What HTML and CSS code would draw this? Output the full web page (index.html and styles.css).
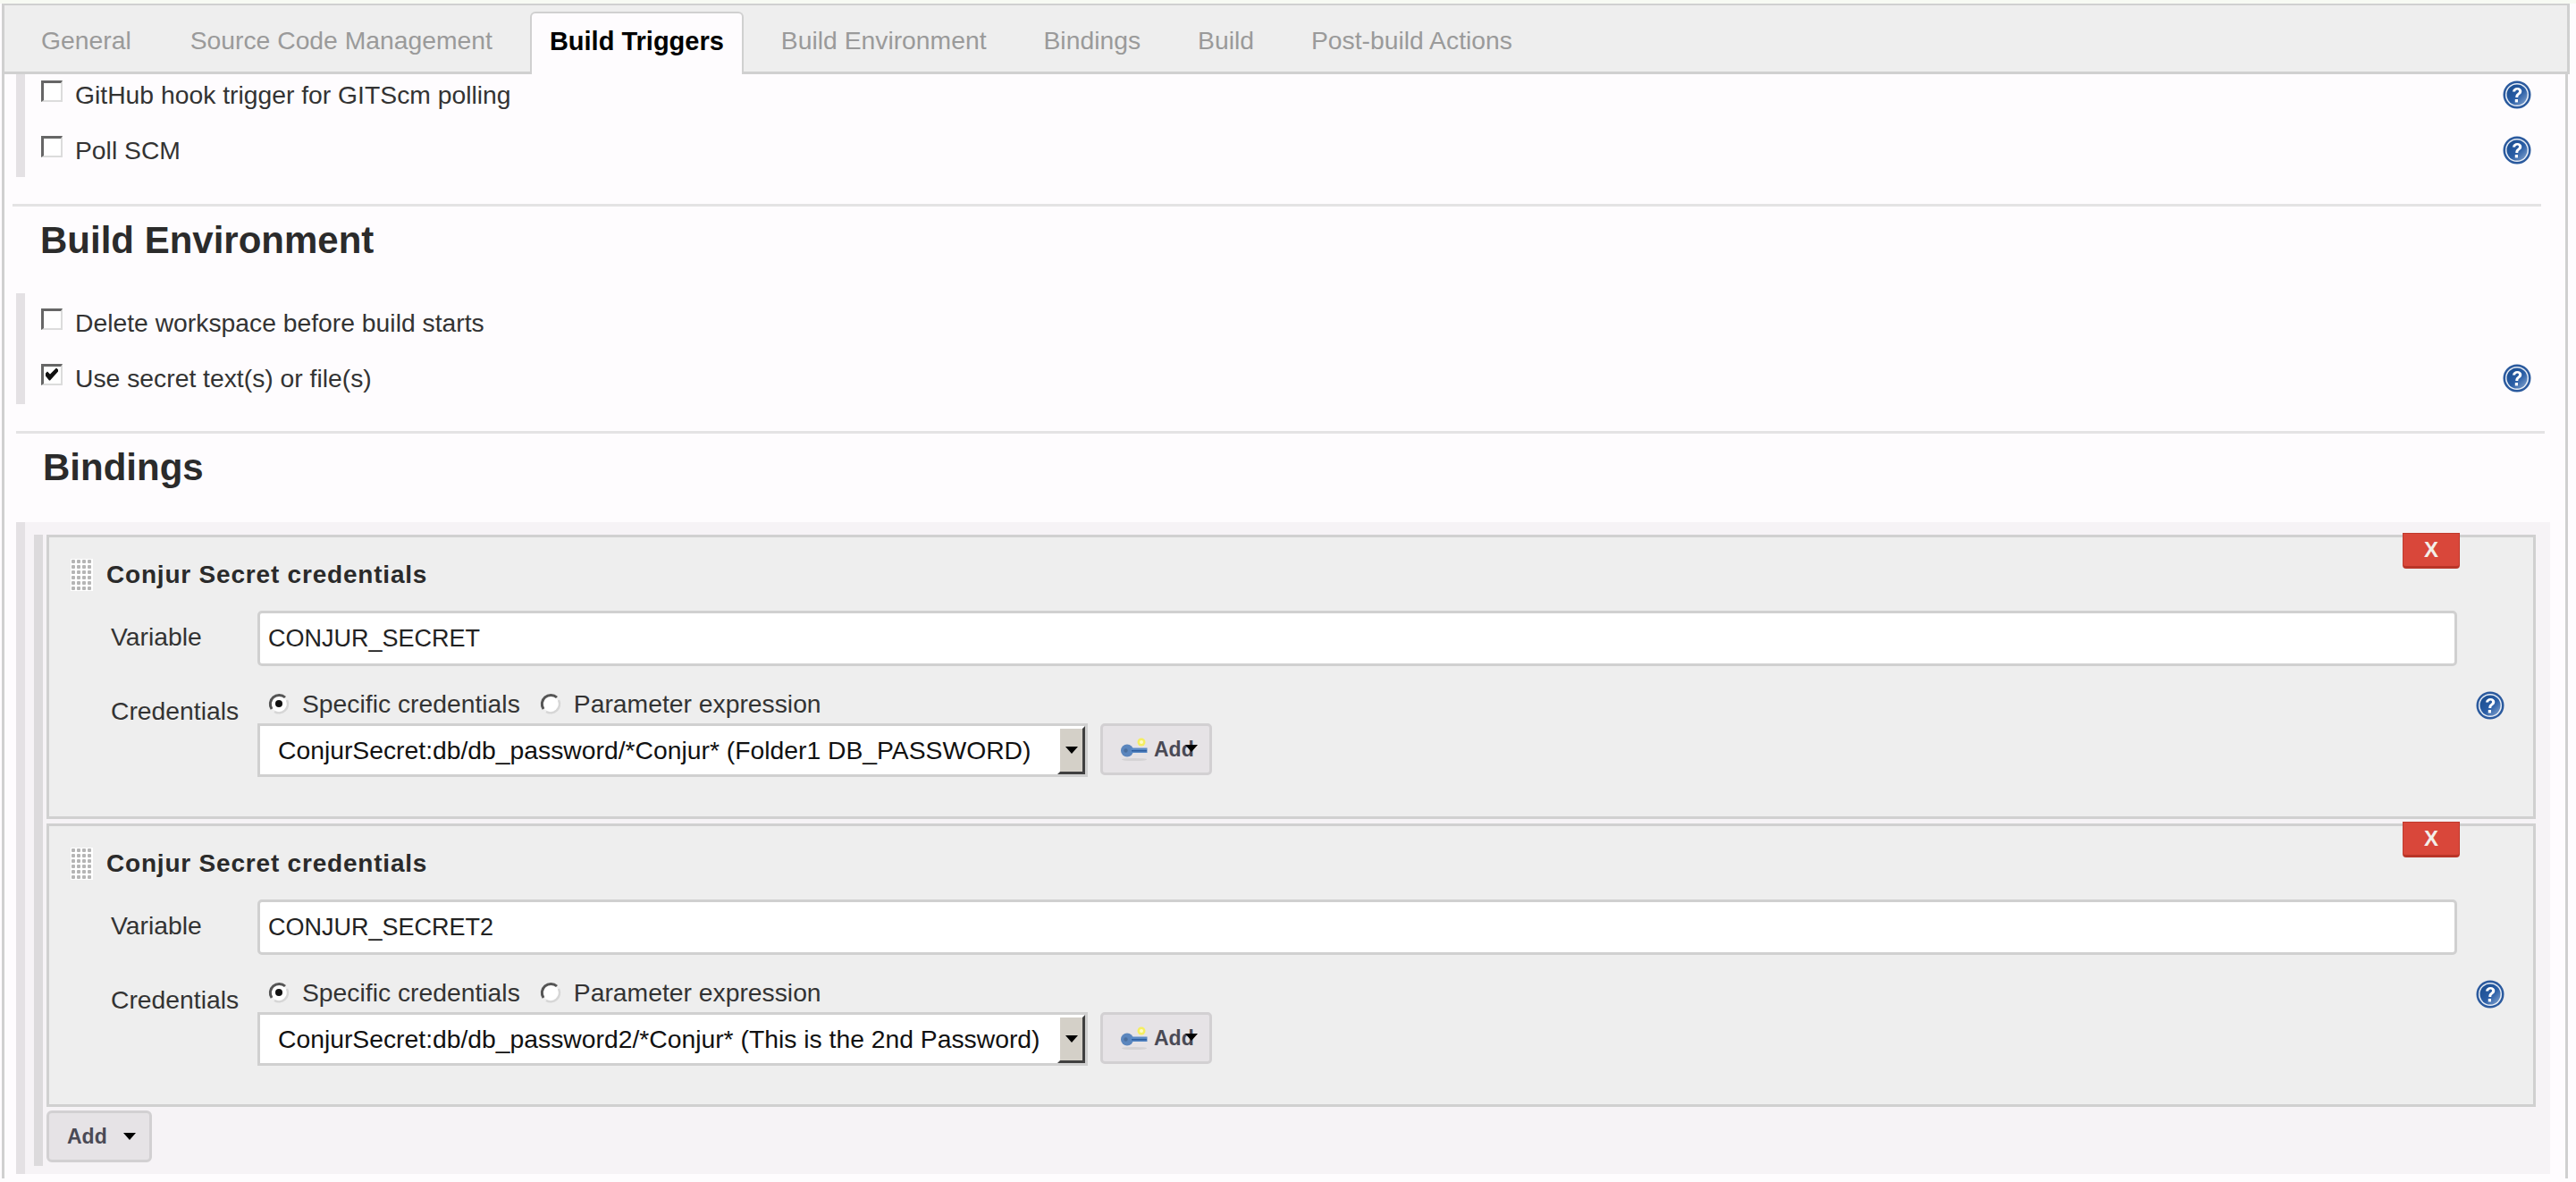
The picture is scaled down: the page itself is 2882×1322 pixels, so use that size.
FILE: index.html
```html
<!DOCTYPE html>
<html lang="en">
<head>
<meta charset="utf-8">
<title>Build Triggers</title>
<link rel="stylesheet" href="styles.css">
</head>
<body>
<svg class="defs" width="0" height="0" aria-hidden="true">
  <defs>
    <linearGradient id="helpfill" x1="0" y1="0" x2="1" y2="1">
      <stop offset="0" stop-color="#174a8c"/>
      <stop offset="0.55" stop-color="#2a5ea6"/>
      <stop offset="1" stop-color="#8aa9d2"/>
    </linearGradient>
    <symbol id="help" viewBox="0 0 32 32">
      <circle cx="16" cy="16" r="15.500" fill="#2b5a9e"/>
      <circle cx="16" cy="16" r="13" fill="#e8eef6"/>
      <circle cx="16" cy="16" r="11.500" fill="url(#helpfill)"/>
      <path d="M11 12.500c.4-3 2.500-4.600 5.300-4.600 3 0 5 1.700 5 4.200 0 2-1.100 3-2.500 4-1.200.9-1.500 1.500-1.500 3h-3c0-2.500.6-3.500 2-4.600 1.100-.8 1.800-1.400 1.800-2.400 0-1-.7-1.600-1.800-1.600-1.200 0-2 .8-2.200 2z" fill="#fff"/>
      <rect x="13.800" y="21" width="3.200" height="3.400" fill="#fff"/>
    </symbol>
    <symbol id="key" viewBox="0 0 30 28">
      <ellipse cx="15" cy="25.500" rx="14" ry="1.600" fill="#d5d3d5"/>
      <circle cx="23" cy="6" r="4.500" fill="#f5ee62"/>
      <circle cx="23" cy="6" r="2" fill="#fffbc4"/>
      <circle cx="7" cy="15.500" r="7" fill="#5b86bd"/>
      <circle cx="5.500" cy="15.500" r="2.200" fill="#4a6f9e"/>
      <rect x="11" y="12.500" width="18.500" height="5.500" fill="#5a8ac6"/>
      <rect x="12" y="15" width="17" height="1.500" fill="#2c5d9e"/>
    </symbol>
    <symbol id="check" viewBox="0 0 16 16">
      <path d="M1 7l2-2 3 3 7-7 2 2v2l-9 10h-1l-4-5z" fill="#111"/>
    </symbol>
    <symbol id="radio" viewBox="0 0 24 24">
      <circle cx="12" cy="12" r="9" fill="#fff"/>
      <path d="M4 18A10 10 0 0 1 19 5" fill="none" stroke="#555" stroke-width="3"/>
      <path d="M21 8A10 10 0 0 1 7 21" fill="none" stroke="#d6d6d6" stroke-width="2.500"/>
    </symbol>
  </defs>
</svg>
<div class="page">
  <nav class="tabs">
    <span class="tab">General</span>
    <span class="tab">Source Code Management</span>
    <span class="tab tab-active">Build Triggers</span>
    <span class="tab">Build Environment</span>
    <span class="tab">Bindings</span>
    <span class="tab">Build</span>
    <span class="tab">Post-build Actions</span>
  </nav>
  <main class="content">
    <section class="group group-first">
      <div class="opt">
        <span class="cb"></span><span class="opt-label">GitHub hook trigger for GITScm polling</span>
        <svg class="help"><use href="#help"/></svg>
      </div>
      <div class="opt">
        <span class="cb"></span><span class="opt-label">Poll SCM</span>
        <svg class="help"><use href="#help"/></svg>
      </div>
    </section>
    <hr class="rule rule-a">
    <h2 class="heading heading-a">Build Environment</h2>
    <section class="group group-second">
      <div class="opt">
        <span class="cb"></span><span class="opt-label">Delete workspace before build starts</span>
      </div>
      <div class="opt">
        <span class="cb"><svg class="tick"><use href="#check"/></svg></span><span class="opt-label">Use secret text(s) or file(s)</span>
        <svg class="help"><use href="#help"/></svg>
      </div>
    </section>
    <hr class="rule rule-b">
    <h2 class="heading heading-b">Bindings</h2>
    <section class="repeat">
      <div class="repeat-inner">
        <article class="panel">
          <button class="del">X</button>
          <header class="panel-head"><span class="grip"></span><span class="panel-title">Conjur Secret credentials</span></header>
          <div class="row row-var">
            <label class="row-label">Variable</label>
            <div class="field">CONJUR_SECRET</div>
          </div>
          <div class="row row-cred">
            <label class="row-label row-label-cred">Credentials</label>
            <div class="cred">
              <div class="radios">
                <span class="radio"><svg class="radio-ico"><use href="#radio"/></svg><i class="dot"></i></span><span class="radio-text">Specific credentials</span>
                <span class="radio radio-b"><svg class="radio-ico"><use href="#radio"/></svg></span><span class="radio-text">Parameter expression</span>
              </div>
              <div class="picker">
                <div class="select"><span class="select-text">ConjurSecret:db/db_password/*Conjur* (Folder1 DB_PASSWORD)</span><span class="select-btn"><i class="arrow"></i></span></div>
                <button class="add-key"><svg class="key"><use href="#key"/></svg><span class="add-key-text">Add</span><i class="arrow arrow-over"></i></button>
              </div>
            </div>
            <svg class="help help-cred"><use href="#help"/></svg>
          </div>
        </article>
        <article class="panel">
          <button class="del">X</button>
          <header class="panel-head"><span class="grip"></span><span class="panel-title">Conjur Secret credentials</span></header>
          <div class="row row-var">
            <label class="row-label">Variable</label>
            <div class="field">CONJUR_SECRET2</div>
          </div>
          <div class="row row-cred">
            <label class="row-label row-label-cred">Credentials</label>
            <div class="cred">
              <div class="radios">
                <span class="radio"><svg class="radio-ico"><use href="#radio"/></svg><i class="dot"></i></span><span class="radio-text">Specific credentials</span>
                <span class="radio radio-b"><svg class="radio-ico"><use href="#radio"/></svg></span><span class="radio-text">Parameter expression</span>
              </div>
              <div class="picker">
                <div class="select"><span class="select-text">ConjurSecret:db/db_password2/*Conjur* (This is the 2nd Password)</span><span class="select-btn"><i class="arrow"></i></span></div>
                <button class="add-key"><svg class="key"><use href="#key"/></svg><span class="add-key-text">Add</span><i class="arrow arrow-over"></i></button>
              </div>
            </div>
            <svg class="help help-cred"><use href="#help"/></svg>
          </div>
        </article>
        <button class="add-main"><span>Add</span><i class="arrow"></i></button>
      </div>
    </section>
  </main>
</div>
</body>
</html>
```
FILE: styles.css
```css
* { box-sizing: border-box; }
html, body { margin: 0; padding: 0; }
body {
  width: 2882px;
  height: 1322px;
  overflow: hidden;
  background: #fefcfe;
  color: #333;
  font-family: "Liberation Sans", Arial, sans-serif;
  font-size: 28.3px;
}
.defs { position: absolute; }
.page { padding: 4px 7px 0 2px; background: linear-gradient(#f7faf3 4px, transparent 4px); }

.tabs {
  display: flex;
  align-items: flex-end;
  height: 79px;
  padding-left: 9px;
  background: #eeeeee;
  border: 3px solid #d0d0d0;
  border-bottom-width: 3px;
  border-top-width: 2px;
}
.tab {
  display: flex;
  align-items: center;
  height: 70px;
  margin: 0 10px -3px;
  padding: 0 22px 6px;
  color: #9a9a9a;
  white-space: nowrap;
}
.tab:first-child { margin-right: 12px; }
.tab-active {
  background: #fefcfe;
  border: 2px solid #d0d0d0;
  border-bottom: 0;
  border-radius: 6px 6px 0 0;
  padding: 0 20px 5px;
  color: #000;
  font-weight: 700;
  font-size: 29px;
}

.content {
  position: relative;
  height: 1235px;
  padding: 0 0 0 12px;
  margin-right: 2px;
  border-left: 3px solid #d0d0d0;
  border-right: 3px solid #d0d0d0;
}
.group {
  border-left: 10px solid #e4e1e4;
  margin-left: 1px;
}
.group-first { height: 115px; padding-top: 7px; }
.group-second { height: 124px; padding-top: 17px; }
.opt {
  display: flex;
  align-items: flex-start;
  height: 62px;
  padding-left: 18px;
  padding-right: 7px;
  width: 2811px;
}
.cb {
  position: relative;
  flex: none;
  width: 24px;
  height: 24px;
  background: #fff;
  border-style: solid;
  border-width: 3px 2px 2px 3px;
  border-color: #666 #dcdcdc #dcdcdc #666;
}
.tick { position: absolute; left: 1px; top: 0; width: 16px; height: 17px; }
.opt-label { margin-left: 14px; line-height: 32px; color: #333; }
.help { flex: none; width: 32px; height: 32px; margin-left: auto; }

.rule {
  height: 3px;
  margin: 0;
  border: 0;
  background: #e4e3e4;
  width: 2829px;
}
.rule-a { margin: 30px 0 0 -3px; }
.rule-b { margin: 30px 0 0 1px; }
.heading {
  margin: 0;
  font-size: 42px;
  line-height: 46px;
  font-weight: 700;
  color: #2b2b2b;
}
.heading-a { padding: 15px 0 0 28px; height: 97px; }
.heading-b { padding: 15px 0 0 31px; height: 99px; }

.repeat {
  height: 729px;
  width: 2835px;
  margin-left: 1px;
  padding: 14px 0 0 10px;
  background: #f6f3f6;
  border-left: 10px solid #e4e1e4;
  margin-right: 0;
}
.repeat-inner {
  height: 706px;
  padding-left: 4px;
  border-left: 10px solid #dcdadc;
  width: 2799px;
}
.panel {
  position: relative;
  height: 318px;
  margin-bottom: 5px;
  padding: 24px 0 0 24px;
  background: #eeeeee;
  border: 3px solid #d0d0d0;
}
.panel + .panel { height: 317px; margin-bottom: 4px; }
.del {
  position: absolute;
  top: -5px;
  right: 82px;
  width: 64px;
  height: 40px;
  padding: 0;
  border: 1px solid #bf3a2d;
  border-bottom: 3px solid #b93528;
  border-radius: 0 0 4px 4px;
  background: #d9473a;
  color: #f3efe9;
  font: 700 24px "Liberation Sans", Arial, sans-serif;
}
.panel-head { display: flex; align-items: center; height: 36px; }
.grip {
  width: 25px;
  height: 36px;
  flex: none;
  background: #fff radial-gradient(circle, #b5b5b5 2px, transparent 2.500px) 0 0 / 6px 6px;
}
.panel-title {
  margin-left: 15px;
  font-size: 28px;
  font-weight: 700;
  color: #2a2a2a;
  letter-spacing: 0.8px;
}
.row { display: flex; align-items: flex-start; }
.row-var { margin-top: 22px; }
.row-cred { margin-top: 25px; }
.row-label { width: 209px; flex: none; padding-left: 45px; line-height: 30px; color: #333; }
.row-var .row-label { padding-top: 14px; }
.row-label-cred { padding-top: 10px; }
.field {
  width: 2461px;
  height: 62px;
  padding: 0 9px;
  display: flex;
  align-items: center;
  background: #fff;
  border: 3px solid #d0d0d0;
  border-radius: 5px;
  color: #222;
  font-size: 27px;
}
.cred { flex: none; width: 1100px; }
.radios { display: flex; align-items: center; height: 39px; padding-left: 12px; padding-bottom: 5px; color: #333; }
.radio { position: relative; width: 24px; height: 24px; flex: none; margin-right: 14px; }
.radio-b { margin-left: 22px; }
.radio-ico { width: 24px; height: 24px; display: block; }
.dot {
  position: absolute;
  left: 8px;
  top: 8px;
  width: 8px;
  height: 8px;
  border-radius: 50%;
  background: #111;
}
.picker { display: flex; align-items: flex-start; margin-top: 0; }
.select {
  display: flex;
  width: 929px;
  height: 60px;
  background: #fff;
  border: 3px solid #d0d0d0;
}
.select-text { flex: 1; padding-left: 20px; line-height: 54px; color: #111; white-space: nowrap; overflow: hidden; }
.select-btn {
  width: 31px;
  flex: none;
  display: flex;
  align-items: center;
  justify-content: center;
  background: #d4d0c8;
  border: 3px solid;
  border-color: #fff #404040 #404040 #fff;
}
.arrow {
  display: block;
  width: 0;
  height: 0;
  border: 7px solid transparent;
  border-top: 8px solid #000;
  border-bottom: 0;
}
.add-key {
  position: relative;
  display: flex;
  align-items: center;
  width: 125px;
  height: 58px;
  margin-left: 14px;
  padding: 0 0 0 20px;
  background: #e6e3e6;
  border: 3px solid #d2d0d2;
  border-radius: 5px;
  color: #4a4a55;
  font: 700 23px "Liberation Sans", Arial, sans-serif;
}
.key { width: 30px; height: 28px; flex: none; }
.add-key-text { margin-left: 7px; }
.arrow-over { position: absolute; left: 92px; top: 21px; }
.help-cred { margin-left: 1382px; margin-top: 3px; }

.add-main {
  display: flex;
  align-items: center;
  width: 118px;
  height: 58px;
  padding: 0 0 0 20px;
  background: #e6e3e6;
  border: 3px solid #d2d0d2;
  border-radius: 6px;
  color: #4a4a55;
  font: 700 23px "Liberation Sans", Arial, sans-serif;
}
.add-main .arrow { margin-left: 18px; }
```
